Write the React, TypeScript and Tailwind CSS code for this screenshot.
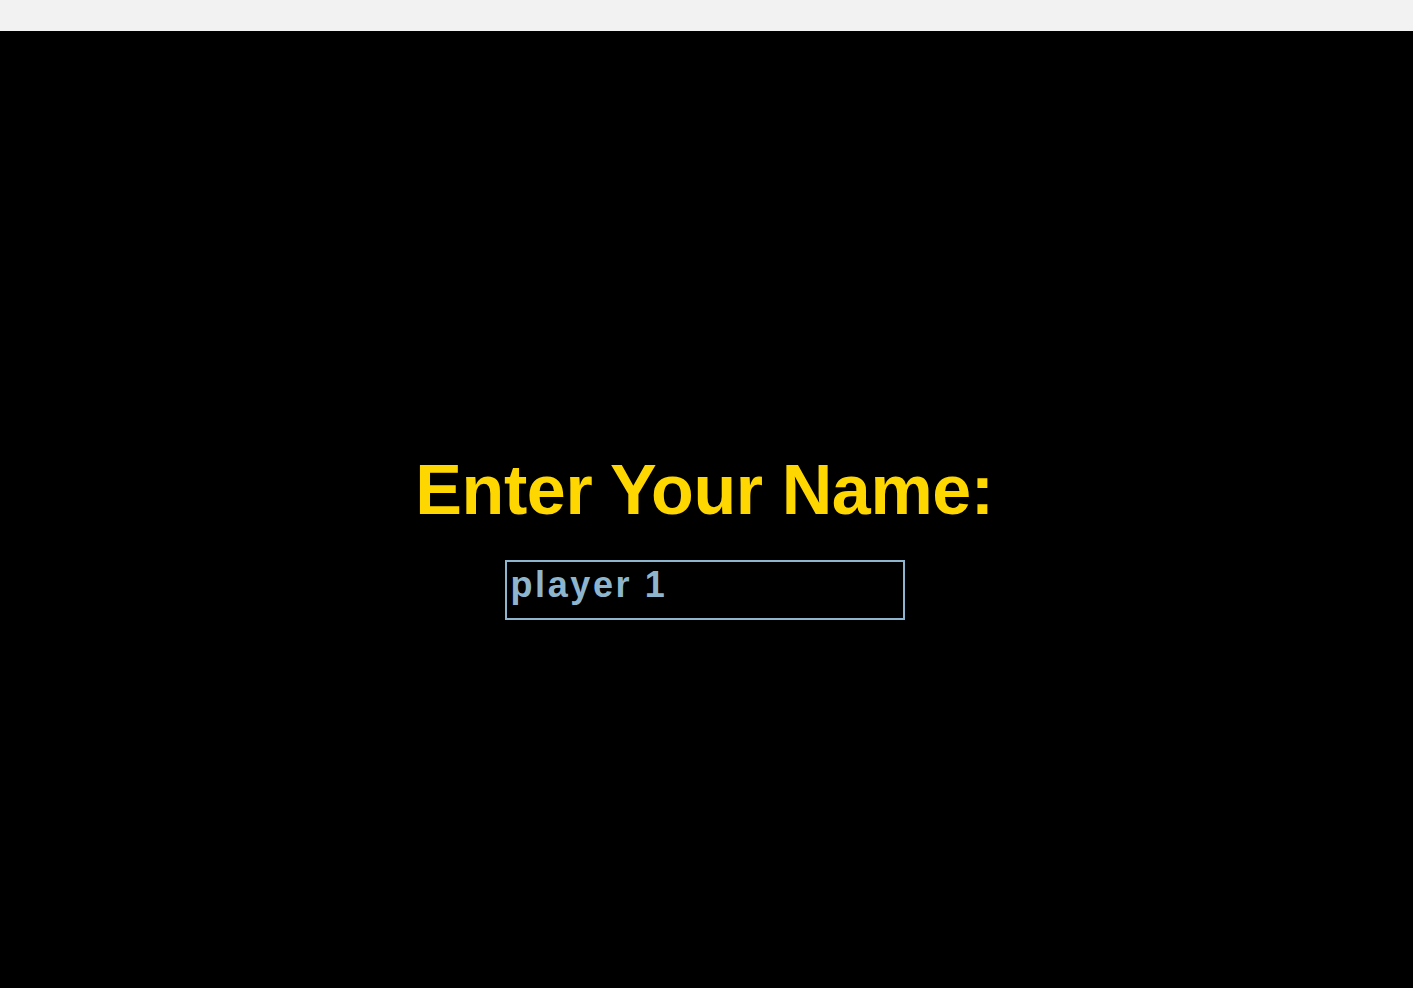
import React, { useState } from 'react';

const App = () => {
  const [name, setName] = useState('player 1');

  return (
    <div className="w-full min-h-screen bg-[#f2f2f2]" style={{ fontFamily: '"Liberation Sans", Arial, sans-serif' }}>
      <div className="h-[31px] bg-[#f2f2f2]" />
      <div className="h-[957px] bg-black flex flex-col items-center justify-center pt-[50px] pr-[4px]">
        <h1 className="text-[70px] leading-[83px] font-bold tracking-[-0.4px] text-[#ffd700]">Enter Your Name:</h1>
        <input
          value={name}
          onChange={(e) => setName(e.target.value)}
          className="mt-[28px] w-[400px] border-2 border-[#8db6ce] bg-black pl-[4px] pt-[2px] pb-[13px] text-[36px] leading-[41px] font-bold tracking-[2.6px] text-[#8db6ce] outline-none"
          style={{ fontFamily: '"Liberation Sans", Arial, sans-serif' }}
        />
      </div>
    </div>
  );
};

export default App;
